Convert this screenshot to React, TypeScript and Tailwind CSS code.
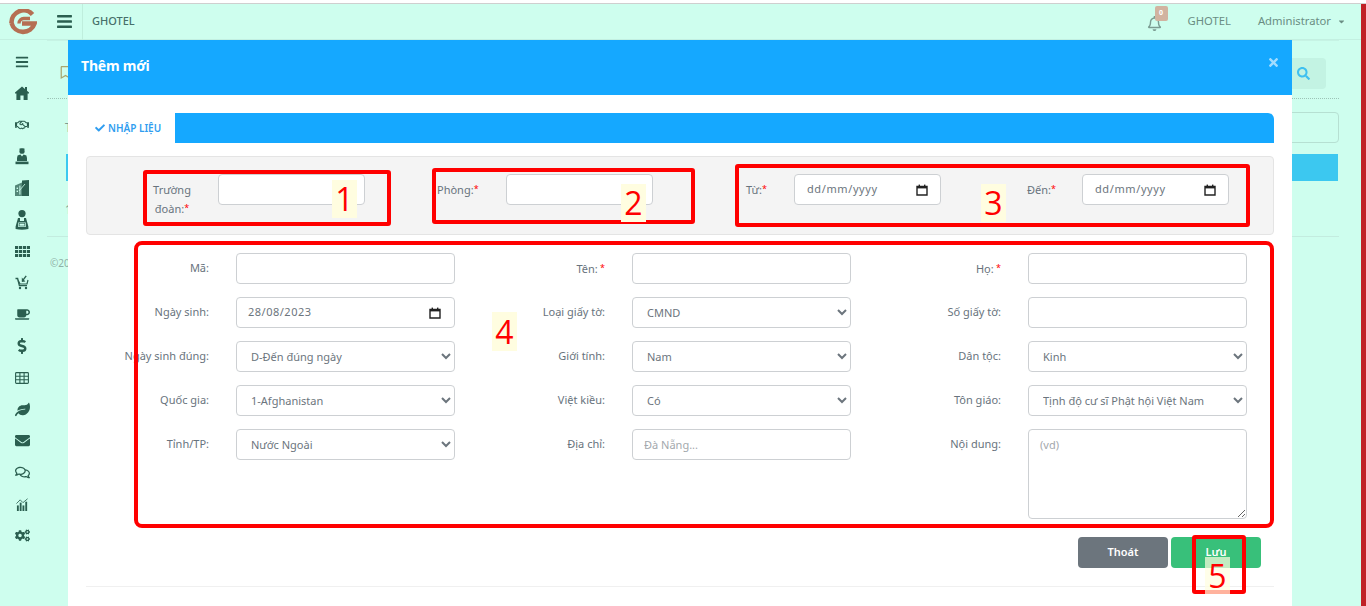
import React from "react";
import {
  FaBars, FaRegHandshake, FaCoffee, FaDollarSign, FaLeaf, FaEnvelope,
  FaRegComments, FaCogs, FaRegBell, FaSearch, FaCheck, FaTimes, FaRegBookmark, FaCaretDown,
} from "react-icons/fa";

const fontStack = "font-['Noto_Sans','Open_Sans',sans-serif]";
const ink = "#2b5f50";

function Logo() {
  return (
    <svg width="28" height="28" viewBox="0 0 28 28" fill="none" stroke="#b56f53" strokeWidth="4.6">
      <path d="M23.5 5.5 A12 12 0 0 0 2.5 14" />
      <path d="M2.5 14 A12 12 0 0 0 25.5 14.5 H13" />
      <path d="M10 14.5 A4.8 4.8 0 0 1 15 9.5 H21" strokeWidth="3.4" />
    </svg>
  );
}

function HomeIcon() {
  return (
    <svg width="14" height="14" viewBox="0 0 14 14" fill={ink}>
      <path d="M7 0.5 L10 3 V1 H12 V4.8 L14 6.6 V7.4 H12.6 V14 H8.6 V9.6 H5.4 V14 H1.4 V7.4 H0 V6.6 Z" />
    </svg>
  );
}

function DeskPerson() {
  return (
    <svg width="14" height="17" viewBox="0 0 14 17" fill={ink}>
      <circle cx="7" cy="3.2" r="2.6" />
      <rect x="4.6" y="0.4" width="4.8" height="1.6" />
      <path d="M2 10 L2.6 7.4 L5.4 6.4 L7 8.6 L8.6 6.4 L11.4 7.4 L12 10 V13 H2 Z" />
      <rect x="0.5" y="13.6" width="13" height="2.6" />
    </svg>
  );
}

function Building() {
  return (
    <svg width="14" height="16" viewBox="0 0 14 16" fill={ink}>
      <path d="M0 5.5 L7 2.5 V16 H0 Z" opacity="0.75" />
      <path d="M7 0.6 L14 0 V16 H7 Z" />
      <rect x="1.6" y="7.6" width="1.4" height="1.4" fill="#cefeee" />
      <rect x="1.6" y="10.6" width="1.4" height="1.4" fill="#cefeee" />
      <rect x="4.4" y="5.6" width="1" height="9" fill="#cefeee" />
      <path d="M4 11 L10 4" stroke="#cefeee" strokeWidth="0.8" />
    </svg>
  );
}

function Worker() {
  return (
    <svg width="14" height="20" viewBox="0 0 14 20" fill={ink}>
      <circle cx="7" cy="3.6" r="3.6" />
      <path d="M3 8 L0.6 16.5 L0.6 19 Q7 20.5 13.4 19 V16.5 L11 8 L9 8 L9 11 H5 L5 8 Z" />
      <rect x="3.2" y="12.5" width="7.6" height="4.5" fill="#cefeee" />
      <rect x="4.2" y="13.5" width="5.6" height="2.5" fill="none" stroke={ink} strokeWidth="0.6" />
    </svg>
  );
}

function Grid4x3() {
  return (
    <svg width="15" height="11" viewBox="0 0 15 11" fill={ink}>
      {[0, 4, 8].map((y) =>
        [0, 4, 8, 12].map((x) => <rect key={`${x}-${y}`} x={x} y={y} width="3.2" height="3" />)
      )}
    </svg>
  );
}

function CartIcon() {
  return (
    <svg width="14" height="15" viewBox="0 0 14 15" fill="none" stroke={ink} strokeWidth="1.4">
      <path d="M0.5 3.5 H2.6 L4.4 10.6 H12" />
      <path d="M3.2 5.4 L5 9 H12 L13 5" strokeWidth="1.2" />
      <circle cx="5" cy="13" r="1.2" fill={ink} stroke="none" />
      <circle cx="11" cy="13" r="1.2" fill={ink} stroke="none" />
      <path d="M7.4 5.8 L11.2 0.8" strokeWidth="1.4" />
      <path d="M6.8 2.6 L6.8 7 L10.4 6.4 Z" fill={ink} stroke="none" />
    </svg>
  );
}

function TableIcon() {
  return (
    <svg width="14" height="12" viewBox="0 0 14 12" fill="none" stroke={ink} strokeWidth="1.1">
      <rect x="0.6" y="0.6" width="12.8" height="10.8" rx="0.8" />
      <path d="M0.6 4.2 H13.4 M0.6 7.8 H13.4 M4.9 0.6 V11.4 M9.1 0.6 V11.4" />
    </svg>
  );
}

function ChartIcon() {
  return (
    <svg width="13" height="13" viewBox="0 0 14 14" fill={ink}>
      <rect x="1" y="8" width="2" height="6" />
      <rect x="4" y="5" width="2" height="9" />
      <rect x="7" y="8" width="2" height="6" />
      <rect x="10" y="4" width="2" height="10" />
      <path d="M0.5 6 L4.5 2 L7.5 5 L12.5 0.8" fill="none" stroke={ink} strokeWidth="0.9" />
    </svg>
  );
}

const sideIcons = [
  <FaBars key="a" size={14} />,
  <HomeIcon key="b" />,
  <FaRegHandshake key="c" size={14} />,
  <DeskPerson key="d" />,
  <Building key="e" />,
  <Worker key="f" />,
  <Grid4x3 key="g" />,
  <CartIcon key="h" />,
  <FaCoffee key="i" size={15} />,
  <FaDollarSign key="j" size={16} />,
  <TableIcon key="k" />,
  <FaLeaf key="l" size={15} />,
  <FaEnvelope key="m" size={15} />,
  <FaRegComments key="n" size={15} />,
  <ChartIcon key="o" />,
  <FaCogs key="p" size={15} />,
];

const Star = () => <span className="align-[2px] text-[9px] text-[#ff0000]">*</span>;

const boxCls =
  "h-[31px] rounded-[4px] border border-[#cdd0d3] bg-white text-[11px] text-[#6c757d] outline-none";

function TextBox({ w = "w-[219px]", placeholder }: { w?: string; placeholder?: string }) {
  return <input type="text" placeholder={placeholder} className={`${boxCls} ${w} px-[11px] placeholder:text-[#a3a8ad]`} />;
}

function DateBox({ text, w = "w-[147px]", tracking = "tracking-[0.6px]", pad = "pl-[12px] pr-[12px]" }: { text: string; w?: string; tracking?: string; pad?: string }) {
  return (
    <div className={`${boxCls} ${w} ${pad} flex items-center justify-between`}>
      <span className={tracking}>{text}</span>
      <svg width="12" height="12" viewBox="0 0 12 12" className="shrink-0">
        <path d="M1 2.5 H11 V11 H1 Z" fill="none" stroke="#222" strokeWidth="1.4" />
        <rect x="1" y="2" width="10" height="2.4" fill="#222" />
        <rect x="2.6" y="0.6" width="1.4" height="2" fill="#222" />
        <rect x="8" y="0.6" width="1.4" height="2" fill="#222" />
      </svg>
    </div>
  );
}

function Sel({ value }: { value: string }) {
  return (
    <select defaultValue={value} className={`${boxCls} w-[219px] pl-[10px] pr-[2px]`}>
      <option>{value}</option>
    </select>
  );
}

function Field({ label, req, children }: { label: string; req?: boolean; children: React.ReactNode }) {
  return (
    <div className="flex items-start">
      <div className="w-[123px] shrink-0 whitespace-nowrap text-right text-[11px] leading-[30px] text-[#68737d]">
        {label}
        {req && <span className="align-[2px] text-[9px] text-[#ff0000]"> *</span>}
      </div>
      <div className="ml-[27px]">{children}</div>
    </div>
  );
}

function Note({ n, cls }: { n: string; cls: string }) {
  return (
    <div className={`absolute flex w-[25px] items-center justify-center font-['Open_Sans',sans-serif] text-[32px] font-medium leading-none text-[#ff0000] ${cls}`}>
      {n}
    </div>
  );
}

export default function App() {
  return (
    <div className={`relative flex h-[606px] w-[1366px] flex-col overflow-hidden bg-white ${fontStack}`}>
      <div className="h-[4px] shrink-0 border-b border-[#cfcfcf] bg-white" />
      <div className="flex min-h-0 flex-1">
        <div className="flex min-w-0 flex-1 flex-col bg-[#cefeee]">
          {/* header */}
          <div className="flex h-[36px] shrink-0 items-center border-b border-[#c3f0e1]">
            <div className="flex w-[46px] justify-center pt-[2px]">
              <Logo />
            </div>
            <div className="ml-[10px] text-[#2b5f50]">
              <FaBars size={17} />
            </div>
            <div className="ml-[9px] h-[36px] w-px bg-[#bfeedd]" />
            <div className="ml-[9px] pb-[1px] text-[11px] font-medium text-[#47706a]">GHOTEL</div>
            <div className="relative ml-auto mt-[3px] text-[#7b9c92]">
              <FaRegBell size={15} />
              <div className="absolute left-[8px] top-[-10px] flex h-[15px] w-[13px] items-center justify-center rounded-[2px] bg-[#d1b3a0] text-[7px] font-bold text-white">
                0
              </div>
            </div>
            <div className="ml-[26px] text-[11.25px] text-[#6a8d83]">GHOTEL</div>
            <div className="ml-[27px] text-[11.25px] text-[#6a8d83]">Administrator</div>
            <div className="ml-[6px] mr-[15px] text-[#6a8d83]">
              <FaCaretDown size={9} />
            </div>
          </div>
          <div className="flex min-h-0 flex-1">
            {/* sidebar */}
            <div className="flex w-[44px] shrink-0 flex-col items-center pt-[6px] text-[#2b5f50]">
              {sideIcons.map((icon, i) => (
                <div key={i} className="flex h-[31.6px] w-full items-center justify-center">
                  {icon}
                </div>
              ))}
            </div>
            <div className="w-[3px] shrink-0" />
            {/* page behind the dialog */}
            <div className="w-[1292px] shrink-0 border-t border-[#c6f3e4] pt-[9px] text-[12px] text-[#7d9a90]">
              <div className="flex h-[49px] items-center justify-between border-b border-dotted border-[#9cc4b7] pb-[1px]">
                <FaRegBookmark className="ml-[12px] mt-[-3px] text-[#a9a66d]" size={13} />
                <div className="mr-[13px] flex h-[31px] w-[46px] items-center justify-center rounded-[4px] bg-[#c3f3e3] text-[#3fc0f0]">
                  <FaSearch size={13} />
                </div>
              </div>
              <div className="mt-[13px] flex h-[31px] items-center">
                <span className="ml-[18px]">T</span>
                <div className="ml-auto h-[31px] w-[200px] rounded-[4px] border border-[#b6e0d2]" />
              </div>
              <div className="mt-[11px] h-[27px] w-[1291px] pl-[19px]">
                <div className="h-full bg-[#3cc8f0]" />
              </div>
              <div className="ml-[18px] mt-[20px] h-[35px]">1</div>
              <div className="border-t border-[#c3ecdf] pt-[19px] text-[10px] text-[#8fb0a6]">
                <span className="ml-[3px]">©20</span>
              </div>
            </div>
          </div>
        </div>
        <div className="w-[5px] shrink-0 bg-[#c02026]" />
      </div>

      {/* dialog */}
      <div className="absolute bottom-0 left-[68px] top-[40px] w-[1224px] bg-white">
        <div className="flex h-[55px] items-center justify-between bg-[#15a8ff] pl-[13px] pr-[12px]">
          <div className="mb-[5px] text-[14px] font-bold tracking-[-0.2px] text-white">Thêm mới</div>
          <FaTimes className="mb-[10px] text-white opacity-60" size={13} />
        </div>
        <div className="px-[18px]">
          <div className="mt-[18px] flex h-[30px]">
            <div className="flex w-[89px] items-center gap-[3px] pl-[9px] text-[#2f9df0]">
              <FaCheck size={10} />
              <span className="text-[10px] font-semibold">NHẬP LIỆU</span>
            </div>
            <div className="flex-1 rounded-tr-[6px] bg-[#15a8ff]" />
          </div>
          <div className="mt-[13px] flex h-[79px] items-start rounded-[4px] border border-[#e4e4e4] bg-[#f4f4f4] pt-[17px] text-[11px] text-[#68737d]">
            <div className="ml-[59px] w-[52px] pt-[7px] text-center leading-[18px]">
              Trường đoàn:<Star />
            </div>
            <div className="ml-[20px]"><TextBox w="w-[147px]" /></div>
            <div className="ml-[72px] w-[69px] leading-[30px]">Phòng:<Star /></div>
            <TextBox w="w-[147px]" />
            <div className="ml-[93px] w-[48px] leading-[30px]">Từ:<Star /></div>
            <DateBox text="dd/mm/yyyy" />
            <div className="ml-[86px] w-[55px] leading-[30px]">Đến:<Star /></div>
            <DateBox text="dd/mm/yyyy" />
          </div>

          <div className="mt-[18px] grid grid-cols-3 gap-y-[13px]">
            <Field label="Mã:"><TextBox /></Field>
            <Field label="Tên:" req><TextBox /></Field>
            <Field label="Họ:" req><TextBox /></Field>

            <Field label="Ngày sinh:"><DateBox text="28/08/2023" w="w-[219px]" tracking="tracking-[0.5px]" pad="pl-[11px] pr-[13px]" /></Field>
            <Field label="Loại giấy tờ:"><Sel value="CMND" /></Field>
            <Field label="Số giấy tờ:"><TextBox /></Field>

            <Field label="Ngày sinh đúng:"><Sel value="D-Đến đúng ngày" /></Field>
            <Field label="Giới tính:"><Sel value="Nam" /></Field>
            <Field label="Dân tộc:"><Sel value="Kinh" /></Field>

            <Field label="Quốc gia:"><Sel value="1-Afghanistan" /></Field>
            <Field label="Việt kiều:"><Sel value="Có" /></Field>
            <Field label="Tôn giáo:"><Sel value="Tịnh độ cư sĩ Phật hội Việt Nam" /></Field>

            <Field label="Tỉnh/TP:"><Sel value="Nước Ngoài" /></Field>
            <Field label="Địa chỉ:"><TextBox placeholder="Đà Nẵng..." /></Field>
            <Field label="Nội dung:">
              <textarea
                placeholder="(vd)"
                className="block h-[90px] w-[219px] rounded-[4px] border border-[#cdd0d3] bg-white px-[11px] py-[7px] text-[11px] outline-none placeholder:text-[#a3a8ad]"
              />
            </Field>
          </div>

          <div className="mt-[18px] flex justify-end gap-[3px] pr-[13px]">
            <button className="h-[31px] w-[90px] rounded-[4px] bg-[#6c757d] text-[11px] font-semibold text-white">Thoát</button>
            <button className="h-[31px] w-[90px] rounded-[4px] bg-[#38c07a] text-[11px] font-semibold text-white">Lưu</button>
          </div>
          <div className="mt-[18px] border-t border-[#f0f0f0]" />
        </div>
      </div>

      {/* annotations */}
      <div className="absolute left-[143px] top-[170px] h-[56px] w-[248px] rounded-[3px] border-[4px] border-[#ff0000]" />
      <div className="absolute left-[432px] top-[168px] h-[56px] w-[263px] rounded-[3px] border-[4px] border-[#ff0000]" />
      <div className="absolute left-[735px] top-[164px] h-[63px] w-[515px] rounded-[3px] border-[4px] border-[#ff0000]" />
      <div className="absolute left-[134px] top-[241px] h-[287px] w-[1140px] rounded-[8px] border-[4px] border-[#ff0000]" />
      <div className="absolute left-[1192px] top-[535px] h-[59px] w-[54px] rounded-[3px] border-[4px] border-[#ff0000]" />
      <Note n="1" cls="left-[332px] top-[180px] h-[38px] bg-[#fffde0]" />
      <Note n="2" cls="left-[621px] top-[184px] h-[38px] bg-[#fffde0]" />
      <Note n="3" cls="left-[981px] top-[184px] h-[38px] bg-[#fffde0]" />
      <Note n="4" cls="left-[492px] top-[312px] h-[39px] bg-[#fffde0]" />
      <Note n="5" cls="left-[1205px] top-[557px] h-[37px] bg-[#fffde0]/70" />
    </div>
  );
}
